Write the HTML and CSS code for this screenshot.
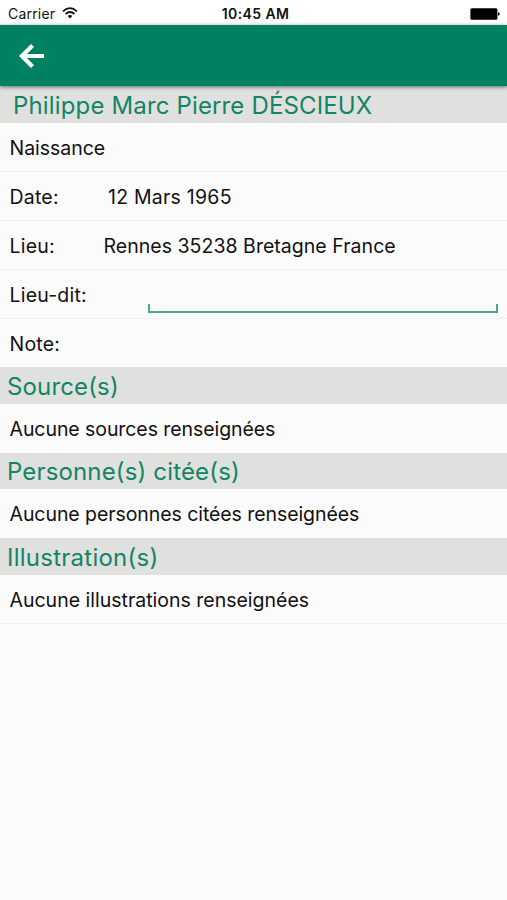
FILE: index.html
```html
<!DOCTYPE html>
<html lang="fr">
<head>
<meta charset="utf-8">
<title>Naissance</title>
<link rel="stylesheet" href="styles.css">
</head>
<body>
<div class="status">
  <div class="carrier"><span>Carrier</span>
    <svg class="wifi" width="16" height="12" viewBox="0 0 16 12" fill="none" stroke="#111" stroke-width="1.8"><path d="M1 4.3Q8-2 15 4.3M3.6 7Q8 3 12.4 7"/><path d="M5.6 9Q8 7 10.4 9L8 11.5Z" fill="#111" stroke="none"/></svg>
  </div>
  <time class="clock">10:45 AM</time>
  <svg class="battery" width="30" height="12" viewBox="0 0 30 12"><rect x=".4" y=".3" width="27" height="11.4" rx="1.5"/><path d="M28 4.3Q29.7 4.5 29.7 6T28 7.7Z"/></svg>
</div>
<header class="bar">
  <svg width="26" height="26" viewBox="0 0 26 26" fill="none" stroke="#fff" stroke-width="4.2"><path d="M25 13H4M13.5 2.4L2.9 13L13.5 23.6"/></svg>
</header>
<main>
  <h1 class="band title"><span>Philippe Marc Pierre DÉSCIEUX</span></h1>
  <div class="row first"><span>Naissance</span></div>
  <div class="row"><span class="label date">Date:</span><span class="date-value">12 Mars 1965</span></div>
  <div class="row"><span class="label lieu">Lieu:</span><span class="place">Rennes 35238 Bretagne France</span></div>
  <div class="row"><span class="label wide">Lieu-dit:</span><span class="field"></span></div>
  <div class="row note last"><span class="label">Note:</span></div>
  <h2 class="band"><span>Source(s)</span></h2>
  <div class="row last"><span class="sources">Aucune sources renseignées</span></div>
  <h2 class="band"><span>Personne(s) citée(s)</span></h2>
  <div class="row last"><span class="sources">Aucune personnes citées renseignées</span></div>
  <h2 class="band illustration"><span>Illustration(s)</span></h2>
  <div class="row"><span class="illustrations">Aucune illustrations renseignées</span></div>
</main>
</body>
</html>
```
FILE: styles.css
```css
* { box-sizing: border-box; }
body { margin: 0; min-height: 900px; background: #fbfbfb; color: #111; font-family: Inter, sans-serif; }
.status { height: 25.4px; padding: 2px 7px 0 8px; background: #fff; display: grid; grid-template-columns: 1fr auto 1fr; align-items: center; }
.carrier { display: flex; align-items: center; gap: 7px; font-size: 14px; letter-spacing: .2px; }
.wifi { margin-top: -2px; }
.clock { margin-left: 3px; font-size: 14px; font-weight: 600; letter-spacing: .4px; }
.battery { justify-self: end; }
.bar { position: relative; height: 61.1px; padding: 0 19px; background: #008262; display: flex; align-items: center; box-shadow: 0 1px 4px rgba(0,0,0,.55); }
.band { margin: 0; height: 36.5px; padding: 2px 0 0 7px; background: #e0e0df; color: #128566; display: flex; align-items: center; font-size: 24px; font-weight: 400; line-height: 30px; letter-spacing: .15px; white-space: nowrap; }
.title { height: 37px; padding-left: 13px; }
.illustration { letter-spacing: .25px; }
.row { height: 49px; padding: 2.4px 9.5px 0; border-bottom: 1px solid #eeefef; display: flex; align-items: center; font-size: 19.5px; line-height: 24px; letter-spacing: -.03px; white-space: nowrap; }
.first { height: 48.2px; }
.note { height: 48.6px; }
.last { border-bottom-color: transparent; }
.label { flex: none; width: 94px; letter-spacing: .2px; }
.date { width: 98.5px; }
.date-value { letter-spacing: .23px; }
.place { letter-spacing: .03px; }
.sources { letter-spacing: -.07px; }
.illustrations { letter-spacing: 0; }
.wide { width: 138px; }
.field { align-self: flex-end; width: 351px; height: 9px; margin-bottom: 5px; border: solid #4aa88b; border-width: 0 2px 2px; }
```
